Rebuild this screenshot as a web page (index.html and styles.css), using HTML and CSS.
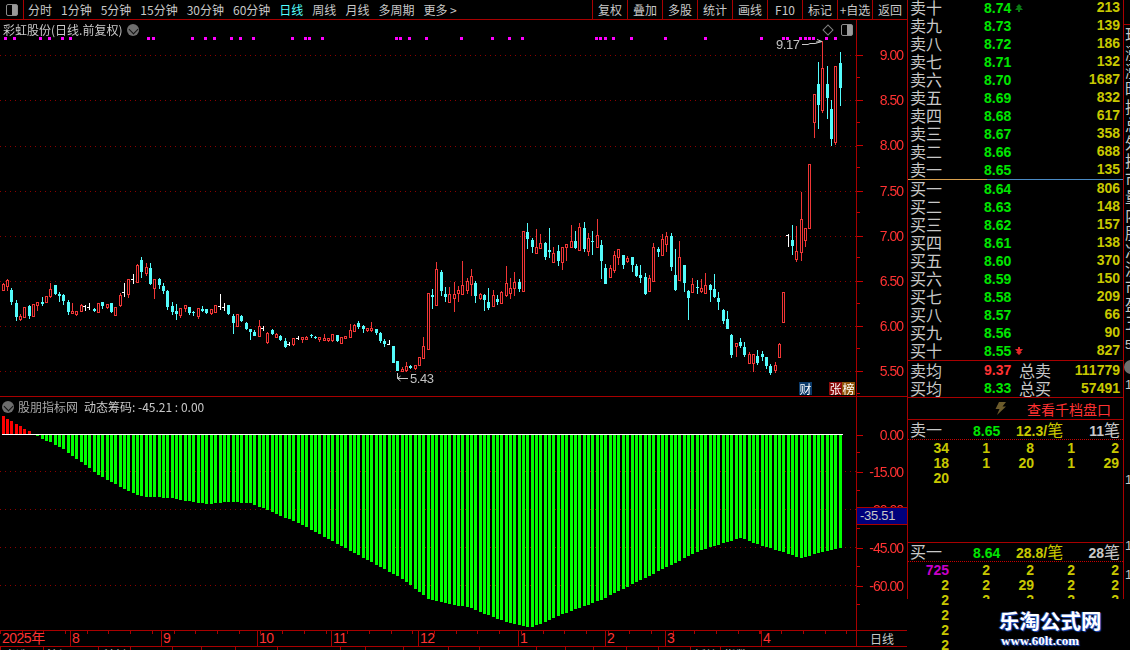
FILE: index.html
```html
<!DOCTYPE html>
<html lang="zh-CN">

<head>
    <meta charset="UTF-8">
    <title>彩虹股份 日线</title>
    <link rel="stylesheet" href="styles.css">
</head>

<body>
    <div class="main">
        <div class="toolbar">
            <div class="panel-toggle"><span class="toggle-icon"></span></div>
            <div class="periods">
                <span>分时</span>
                <span>1分钟</span>
                <span>5分钟</span>
                <span>15分钟</span>
                <span>30分钟</span>
                <span>60分钟</span>
                <span class="active">日线</span>
                <span>周线</span>
                <span>月线</span>
                <span>多周期</span>
                <span>更多 &gt;</span>
            </div>
            <div class="tools">
                <span>复权</span>
                <span>叠加</span>
                <span>多股</span>
                <span>统计</span>
                <span>画线</span>
                <span>F10</span>
                <span>标记</span>
                <span>+自选</span>
                <span>返回</span>
            </div>
        </div>

        <div class="chart-row">
            <div class="plot">
                <canvas id="price" width="856" height="376"></canvas>
                <div class="plot-title">彩虹股份(日线.前复权)<span class="round-btn"></span></div>
                <span class="diamond"></span>
                <span class="toggle-icon plot-toggle"></span>
                <span class="mark mark-high">9.17</span>
                <svg class="arrow arrow-high" width="24" height="8" viewBox="0 0 24 8">
                    <path d="M1 7.500H7L9 6.500H14L21 4.500M21 4.500L16 2.500M21 4.500L15 5" fill="none" stroke="#c8c8c8" />
                </svg>
                <span class="mark mark-low">5.43</span>
                <svg class="arrow arrow-low" width="14" height="9" viewBox="0 0 14 9">
                    <path d="M1.500 0V5.500H12M1.500 5.500L4.500 3M1.500 5.500L4.500 8" fill="none" stroke="#c8c8c8" />
                </svg>
                <span class="badge badge-cai">财</span>
                <span class="badge badge-zhang">张</span>
                <span class="badge badge-bang">榜</span>
            </div>
            <div class="axis price-axis">
                <div class="tick price-tick">9.00</div>
                <div class="tick price-tick">8.50</div>
                <div class="tick price-tick">8.00</div>
                <div class="tick price-tick">7.50</div>
                <div class="tick price-tick">7.00</div>
                <div class="tick price-tick">6.50</div>
                <div class="tick price-tick">6.00</div>
                <div class="tick price-tick">5.50</div>
            </div>
        </div>

        <div class="chart-row indicator-row">
            <div class="plot">
                <canvas id="chips" width="856" height="233"></canvas>
                <div class="plot-title indicator-title">
                    <span class="round-btn"></span>
                    <span class="indicator-name">股朋指标网</span>
                    <span class="indicator-value">动态筹码: -45.21 : 0.00</span>
                </div>
            </div>
            <div class="axis chips-axis">
                <div class="tick chips-tick">0.00</div>
                <div class="tick chips-tick">-15.00</div>
                <div class="tick chips-tick">-30.00</div>
                <div class="tick chips-tick">-45.00</div>
                <div class="tick chips-tick">-60.00</div>
                <div class="cross-value">-35.51</div>
            </div>
        </div>

        <div class="time-row">
            <div class="months">
                <span style="width:70px">2025年</span>
                <span style="width:91px">8</span>
                <span style="width:96px">9</span>
                <span style="width:74px">10</span>
                <span style="width:87px">11</span>
                <span style="width:100px">12</span>
                <span style="width:87px">1</span>
                <span style="width:60px">2</span>
                <span style="width:96px">3</span>
                <span style="width:95px">4</span>
            </div>
            <div class="time-mode">日线</div>
        </div>

        <div class="tabs">
            <span style="width:43px">自选</span>
            <span style="width:55px">沪深</span>
            <span style="width:32px">科创</span>
            <span style="width:42px"></span>
            <span style="width:29px"></span>
            <span style="width:34px"></span>
            <span style="width:42px"></span>
            <span style="width:63px"></span>
            <span style="width:25px"></span>
            <span style="width:38px"></span>
            <span style="width:45px"></span>
            <span style="width:31px"></span>
            <span style="width:57px"></span>
            <span style="width:29px"></span>
            <span style="width:28px"></span>
            <span style="width:33px"></span>
            <span style="width:32px"></span>
            <span style="width:32px"></span>
            <span style="width:30px">板块</span>
            <span style="width:48px">指数</span>
        </div>
    </div>

    <div class="book">
        <div class="levels">
            <div class="level"><span>卖十</span><b class="down">8.74<svg class="flag" width="8" height="8" viewBox="0 0 8 8"><path d="M4 0L7 3H5.500L8 6H5V8H3V6H0L2.500 3H1Z" fill="#0b7a14" /></svg></b><em>213</em></div>
            <div class="level"><span>卖九</span><b class="down">8.73</b><em>139</em></div>
            <div class="level"><span>卖八</span><b class="down">8.72</b><em>186</em></div>
            <div class="level"><span>卖七</span><b class="down">8.71</b><em>132</em></div>
            <div class="level"><span>卖六</span><b class="down">8.70</b><em>1687</em></div>
            <div class="level"><span>卖五</span><b class="down">8.69</b><em>832</em></div>
            <div class="level"><span>卖四</span><b class="down">8.68</b><em>617</em></div>
            <div class="level"><span>卖三</span><b class="down">8.67</b><em>358</em></div>
            <div class="level"><span>卖二</span><b class="down">8.66</b><em>688</em></div>
            <div class="level"><span>卖一</span><b class="down">8.65</b><em>135</em></div>
        </div>
        <div class="spread"></div>
        <div class="levels buy-levels">
            <div class="level"><span>买一</span><b class="down">8.64</b><em>806</em></div>
            <div class="level"><span>买二</span><b class="down">8.63</b><em>148</em></div>
            <div class="level"><span>买三</span><b class="down">8.62</b><em>157</em></div>
            <div class="level"><span>买四</span><b class="down">8.61</b><em>138</em></div>
            <div class="level"><span>买五</span><b class="down">8.60</b><em>370</em></div>
            <div class="level"><span>买六</span><b class="down">8.59</b><em>150</em></div>
            <div class="level"><span>买七</span><b class="down">8.58</b><em>209</em></div>
            <div class="level"><span>买八</span><b class="down">8.57</b><em>66</em></div>
            <div class="level"><span>买九</span><b class="down">8.56</b><em>90</em></div>
            <div class="level"><span>买十</span><b class="down">8.55<svg class="flag" width="8" height="8" viewBox="0 0 8 8"><path d="M4 8L7 5H5.500L8 2H5V0H3V2H0L2.500 5H1Z" fill="#e02828" /></svg></b><em>827</em></div>
        </div>
        <div class="totals">
            <div class="total"><span>卖均</span><b class="up">9.37</b><span class="total-name">总卖</span><em>111779</em></div>
            <div class="total"><span>买均</span><b class="down">8.33</b><span class="total-name">总买</span><em>57491</em></div>
        </div>
        <div class="depth-link">
            <svg width="12" height="13" viewBox="0 0 12 13"><path d="M4 0H11L7.500 4.500H11L2 13L4.500 7H0.500Z" fill="#6b5a2a" /></svg>
            <span>查看千档盘口</span>
        </div>
        <div class="queue sell-queue">
            <div class="queue-head"><span>卖一</span><b class="down">8.65</b><em>12.3/<u>笔</u></em><i>11<u>笔</u></i></div>
            <div class="orders">
                <span>34</span><span>1</span><span>8</span><span>1</span><span>2</span>
                <span>18</span><span>1</span><span>20</span><span>1</span><span>29</span>
                <span>20</span>
            </div>
        </div>
        <div class="queue buy-queue">
            <div class="queue-head"><span>买一</span><b class="down">8.64</b><em>28.8/<u>笔</u></em><i>28<u>笔</u></i></div>
            <div class="orders">
                <span class="big">725</span><span>2</span><span>2</span><span>2</span><span>2</span>
                <span>2</span><span>2</span><span>29</span><span>2</span><span>2</span>
                <span>2</span><span>2</span><span>2</span><span>2</span><span>2</span>
                <span>2</span><span></span><span></span><span></span><span></span>
                <span>2</span><span></span><span></span><span></span><span></span>
                <span>2</span><span></span><span></span><span></span><span></span>
            </div>
        </div>
    </div>

    <div class="strip">
        <div class="strip-chars">现涨涨昨振总外换市量内股净流市盈五</div>
        <div class="strip-num strip-five">5</div>
        <div class="strip-dot"></div>
        <div class="strip-num strip-first">1</div>
        <div class="strip-num strip-second">1</div>
        <div class="strip-num strip-third">1</div>
        <div class="strip-num strip-fourth">1</div>
    </div>

    <div class="watermark">
        <div class="wm-name">乐淘公式网</div>
        <div class="wm-url">www.60lt.com</div>
    </div>

    <script src="chart.js"></script>
</body>

</html>
```

FILE: styles.css
```css
* {
    box-sizing: border-box;
}

html,
body {
    margin: 0;
    height: 650px;
    overflow: hidden;
    background: #000;
}

body {
    display: flex;
    position: relative;
    color: #c8c8c8;
    font-family: "Noto Sans CJK SC", "Liberation Sans", sans-serif;
    font-size: 12px;
}

b,
em,
i {
    font-style: normal;
    font-family: "Liberation Sans", "Noto Sans CJK SC", sans-serif;
}

.main {
    width: 907px;
    flex: none;
    display: flex;
    flex-direction: column;
}

.toolbar {
    height: 20px;
    flex: none;
    display: flex;
    border-bottom: 1px solid #a80000;
    line-height: 19px;
}

.panel-toggle {
    width: 24px;
    border-right: 1px solid #a80000;
    display: flex;
    align-items: center;
    justify-content: center;
}

.toggle-icon {
    display: block;
    width: 12px;
    height: 12px;
    border: 1px solid #8c8c8c;
    border-radius: 2px;
    background: linear-gradient(90deg, #000 55%, #9a9a9a 55%);
}

.periods {
    display: flex;
    gap: 9px;
    padding-left: 4px;
    flex: 1;
    white-space: nowrap;
}

.periods .active {
    color: #54ffff;
}

.tools {
    display: flex;
}

.tools span {
    width: 35px;
    border-left: 1px solid #a80000;
    text-align: center;
    white-space: nowrap;
}

.chart-row {
    display: flex;
    height: 377px;
    flex: none;
    border-bottom: 1px solid #a80000;
}

.indicator-row {
    height: 234px;
    border-bottom: 1px solid #a80000;
}

.plot {
    position: relative;
    width: 856px;
    flex: none;
}

.plot canvas {
    display: block;
}

.plot-title {
    position: absolute;
    left: 3px;
    top: 1px;
    display: flex;
    align-items: center;
    line-height: 17px;
    white-space: nowrap;
}

.round-btn {
    display: inline-block;
    position: relative;
    width: 12px;
    height: 12px;
    margin-left: 5px;
    border-radius: 50%;
    background: #6e6e6e;
}

.round-btn::after {
    content: "";
    position: absolute;
    left: 3px;
    top: 2px;
    width: 6px;
    height: 6px;
    border-right: 1px solid #111;
    border-bottom: 1px solid #111;
    transform: rotate(45deg);
}

.diamond {
    position: absolute;
    left: 824px;
    top: 6px;
    width: 8px;
    height: 8px;
    border: 1px solid #808080;
    transform: rotate(45deg);
}

.plot-toggle {
    position: absolute;
    left: 841px;
    top: 4px;
}

.mark {
    position: absolute;
    font-family: "Liberation Sans", sans-serif;
    font-size: 13px;
    letter-spacing: -0.4px;
    line-height: 14px;
    color: #c0c0c0;
}

.mark-high {
    left: 776px;
    top: 18px;
}

.mark-low {
    left: 410px;
    top: 352px;
}

.arrow {
    position: absolute;
}

.arrow-high {
    left: 801px;
    top: 17px;
}

.arrow-low {
    left: 396px;
    top: 353px;
}

.badge {
    position: absolute;
    top: 362px;
    width: 13px;
    height: 13px;
    font-size: 12px;
    line-height: 13px;
    text-align: center;
    color: #fff;
}

.badge-cai {
    left: 799px;
    background: #0b3a6a;
}

.badge-zhang {
    left: 829px;
    background: #8a0a0a;
}

.badge-bang {
    left: 842px;
    background: #8f5408;
}

.axis {
    position: relative;
    width: 51px;
    flex: none;
    border-left: 1px solid #a80000;
    font-family: "Liberation Sans", sans-serif;
    font-size: 14px;
    letter-spacing: -1px;
    color: #ff3232;
    text-align: right;
    padding-right: 4px;
}

.price-axis {
    padding-top: 12.4px;
}

.chips-axis {
    padding-top: 18.650px;
}

.tick {
    position: relative;
    display: flex;
    align-items: center;
    justify-content: flex-end;
}

.tick::before,
.tick::after {
    content: "";
    position: absolute;
    left: 0;
    height: 1px;
    background: #c80000;
}

.tick::before {
    top: 50%;
    width: 6px;
}

.tick::after {
    bottom: 0;
    width: 3px;
}

.price-tick {
    height: 45.2px;
}

.chips-tick {
    height: 37.8px;
}

.cross-value {
    position: absolute;
    left: 0;
    right: 0;
    top: 110px;
    height: 18px;
    padding-left: 3px;
    background: #00007c;
    border-top: 1px solid #a80000;
    border-bottom: 1px solid #a80000;
    color: #c8c8c8;
    font-size: 13px;
    letter-spacing: -0.3px;
    line-height: 16px;
    text-align: left;
}

.indicator-title {
    left: 2px;
    top: 1px;
}

.indicator-title .round-btn {
    margin-left: 0;
}

.indicator-name {
    margin-left: 4px;
    color: #a8a8a8;
}

.indicator-value {
    margin-left: 6px;
    color: #c8c8c8;
}

.time-row {
    display: flex;
    height: 16px;
    flex: none;
    border-bottom: 1px solid #a80000;
    font-family: "Liberation Sans", "Noto Sans CJK SC", sans-serif;
    line-height: 15px;
}

.months {
    display: flex;
    width: 856px;
    flex: none;
    font-size: 14px;
    letter-spacing: -0.5px;
    color: #ff3232;
    background: repeating-linear-gradient(90deg, #a80000 0 1px, transparent 1px 21.700px) 0 0 / 100% 3px no-repeat;
}

.months span {
    padding-left: 1px;
    border-left: 1px solid #a80000;
    white-space: nowrap;
    flex: none;
}

.months span:first-child {
    border-left: none;
    padding-left: 2px;
}

.time-mode {
    flex: 1;
    border-left: 1px solid #a80000;
    text-align: center;
    font-family: "Noto Sans CJK SC", sans-serif;
}

.tabs {
    display: flex;
    height: 3px;
    overflow: hidden;
    line-height: 15px;
}

.tabs span {
    flex: none;
    padding-left: 3px;
    border-left: 1px solid #a80000;
    white-space: nowrap;
}

.book {
    width: 217px;
    flex: none;
    border-left: 1px solid #a80000;
    border-right: 1px solid #a80000;
    display: flex;
    flex-direction: column;
    height: 599px;
    font-size: 16px;
}

.levels {
    margin-top: -1px;
}

.buy-levels {
    margin-top: 0;
}

.level {
    display: flex;
    height: 18px;
    line-height: 17px;
    padding: 0 3px 0 2px;
    white-space: nowrap;
}

.level span {
    width: 74px;
    flex: none;
}

.level b {
    font-size: 14px;
    flex: 1;
    display: flex;
    align-items: center;
    gap: 4px;
}

.level em,
.total em {
    color: #c8c800;
    font-weight: bold;
    font-size: 14px;
    letter-spacing: 0;
    text-align: right;
}

.down {
    color: #00e600;
}

.up {
    color: #ff3232;
}

.spread {
    height: 1px;
    flex: none;
    background: linear-gradient(90deg, #d9a04e 0 79px, #4a8ac4 79px);
}

.totals {
    height: 38px;
    flex: none;
    border-top: 1px solid #a80000;
    border-bottom: 1px solid #a80000;
}

.total {
    display: flex;
    height: 18px;
    line-height: 18px;
    padding: 0 3px 0 2px;
}

.total span {
    width: 74px;
    flex: none;
}

.total b {
    font-size: 14px;
    width: 35px;
    flex: none;
}

.total .total-name {
    width: 48px;
}

.total em {
    flex: 1;
}

.depth-link {
    height: 22px;
    flex: none;
    display: flex;
    align-items: center;
    justify-content: flex-end;
    gap: 20px;
    padding-right: 12px;
    border-bottom: 1px solid #a80000;
    color: #ff3232;
    font-size: 14px;
}

.queue-head {
    display: flex;
    align-items: baseline;
    height: 20px;
    line-height: 18px;
    padding: 0 2px;
    border-bottom: 1px dotted #c80000;
    white-space: nowrap;
}

.buy-queue .queue-head {
    height: 19px;
    line-height: 17px;
}

.queue-head span {
    width: 63px;
    flex: none;
}

.queue-head b {
    width: 43px;
    flex: none;
    font-size: 14px;
}

.queue-head em {
    width: 70px;
    flex: none;
    color: #c8c800;
    font-size: 14px;
    font-weight: bold;
}

.queue-head i {
    flex: 1;
    font-size: 14px;
    text-align: right;
    font-weight: bold;
    padding-right: 1px;
}

.queue-head u {
    text-decoration: none;
    font-family: "Noto Sans CJK SC", sans-serif;
    font-size: 16px;
    font-weight: normal;
    line-height: 1;
}

.sell-queue {
    height: 123px;
    flex: none;
    border-bottom: 1px solid #a80000;
}

.orders {
    display: grid;
    grid-template-columns: 41px 41px 44px 41px 44px;
    grid-auto-rows: 15px;
    padding-top: 1px;
    font-family: "Liberation Sans", sans-serif;
    font-size: 14px;
    font-weight: bold;
    line-height: 15px;
    color: #c8c800;
    text-align: right;
}

.orders .big {
    color: #c800c8;
}

.strip {
    flex: 1;
    overflow: hidden;
    font-size: 16px;
    white-space: nowrap;
}

.strip-chars {
    width: 16px;
    margin-top: 24px;
    border-top: 1px solid #a80000;
    line-height: 18px;
    white-space: normal;
    padding: 0 0 0 1px;
    text-indent: 0;
}

.strip-num {
    font-family: "Liberation Sans", sans-serif;
    font-size: 13px;
    line-height: 14px;
    padding-left: 1px;
}

.strip-five {
    margin-top: 7px;
}

.strip-dot {
    width: 14px;
    height: 14px;
    margin-top: 8px;
    border-radius: 50%;
    background: #6e6e6e;
}

.strip-first {
    margin-top: 4px;
}

.strip-second {
    margin-top: 81px;
}

.strip-third {
    margin-top: 52px;
}

.strip-fourth {
    margin-top: 15px;
}

.watermark {
    position: absolute;
    left: 955px;
    top: 599px;
    width: 175px;
    height: 51px;
    background: #000;
    padding: 9px 0 0 44px;
    color: #fff;
    font-weight: bold;
    text-shadow: 1px 1px 1px #1f4fc8, -1px 0 1px #1f4fc8;
}

.wm-name {
    font-size: 20.500px;
    line-height: 24px;
    white-space: nowrap;
}

.wm-url {
    font-family: "Liberation Serif", serif;
    font-size: 13px;
    line-height: 17px;
    padding-left: 2px;
}
```

FILE: chart.js
```js
// candles are kind + high,top,bottom,low read off 3x crops, so every block keeps its own origin
const blocks = [
    [250, 'r100,103,120,122 r88,90,107,122 c113,120,156,164 c150,158,201,212 r193,198,207,213 r172,172,201,204 c165,168,198,206 r163,163,198,200 r156,156,165,183 c141,155,161,167 r138,138,155,155 r99,118,137,143 c105,105,133,135 c126,132,137,156 c133,136,153,165 c150,156,185,194 r159,184,190,192 r183,184,191,197 r162,165,183,183 w166,168,170,183 w159,171,173,179 c175,178,183,186 r160,160,185,185 c156,156,167,176 r163,163,171,177 c159,159,186,190 r171,171,194,194 r130,136,164,170 w99,126,128,141 r88,88,131,144 w72,88,90,102 r43,45,95,100 c21,30,66,84 r40,52,69,78 c40,54,102,105 r88,88,113,147 c84,87,105,117 c99,108,123,132 c120,123,171,180 c156,168,186,195 c162,183,192,210 r175,175,195,204 r165,166,174,187 c171,171,189,195 c183,186,188,198 r175,175,198,207 c168,177,183,187 c177,177,189,193 r178,178,189,195 r165,165,186,186 w132,168,171,180 w159,171,173,183 c165,165,192,195 c192,198,219,252 r192,192,228,231 c195,198,213,216 c216,219,237,240 c237,237,246,270 c240,246,258,258 r210,228,258,258 w228,234,236,243 r246,249,276,282 c237,240,252,255 r250,252,261,264 c255,258,270,273 c264,273,291,294 w276,283,285,288 r264,264,282,288 w258,265,267,270'],
    [200, 'r411,412,418,429 r408,411,416,418 c402,405,409,414 c407,411,413,417 r411,412,418,426 r402,415,419,420 r414,415,421,426 r402,403,420,426 c405,405,423,426 r411,411,429,429 r408,408,415,417 r372,390,411,414 r372,375,393,393 c363,369,381,387 c375,378,387,399 r384,384,390,396 r366,384,390,396 c387,387,399,405 c396,399,423,429 c417,423,432,441 w420,432,434,435 c438,438,489,489 c483,483,513,513 r501,507,513,514 r486,498,511,516 c495,498,504,507 r495,495,504,510 r471,471,495,498 r411,438,473,474 r279,279,446,447 c267,285,291,327 r186,207,315,315 c210,216,273,288 c261,282,291,306 r261,282,306,306 r246,282,294,336 r258,270,279,306 r183,255,282,282 r234,243,270,282 r207,228,252,288 c243,249,288,309 r279,282,294,300 c282,285,300,333 c264,306,324,330 r270,285,318,318 c285,297,306,315 r273,276,309,312 r198,249,285,291 r234,264,279,297 r216,246,264,288 c237,246,267,276 r93,93,273,273 c69,96,117,147 c114,120,141,159 r87,141,159,159'],
    [200, 'r102,129,144,144 c126,129,171,180 c84,150,156,174 r141,159,186,186 c135,153,183,198 r141,141,186,210 r132,132,141,183 r75,123,141,141 c93,123,144,147 r69,81,150,150 c66,84,147,156 r99,114,153,168 c93,123,126,165 r57,105,141,141 c120,135,183,237 c192,204,252,252 r195,204,231,231 r153,165,210,219 r147,147,171,195 c165,165,195,207 r168,174,183,189 c171,171,195,216 c192,198,228,231 c195,225,234,249 c219,231,282,285 r225,234,273,276 r129,141,243,243 c141,147,156,171 r102,117,165,168 r96,108,132,156 c99,108,201,213 c147,225,270,273 r123,171,240,240 c195,195,249,276 c270,273,294,360 r234,252,276,276 c240,261,264,282 r237,264,273,279 r219,255,279,282 c252,255,270,306 c222,267,291,294 c276,294,306,330 c327,330,363,372 c333,357,387,387 c402,405,465,474 r429,429,438,471 c414,426,438,444 c426,441,465,471 r456,462,489,489 r462,462,489,516 c450,468,489,495'],
    [170, 'c543,552,561,573 c561,561,588,597 c582,588,609,615 r576,585,600,609 r519,522,561,561 r366,366,456,456 w192,195,197,231 c165,210,228,255 r168,243,267,276 r66,147,246,273 r174,174,210,231 r-18,-18,174,174'],
    [30, 'r192,192,276,324 c96,162,225,297 r33,114,240,249 c108,162,204,267 c210,237,327,348 r108,108,336,345 c66,99,174,228']
];

const candles = [];
blocks.forEach(function (block) {
    block[1].split(' ').forEach(function (item) {
        const v = item.slice(1).split(',').map(function (n) {
            return Math.round(block[0] + Number(n) / 3);
        });
        candles.push({ kind: item[0], high: v[0], top: v[1], bottom: v[2], low: v[3] });
    });
});

const dots = [5, 14, 40, 49, 62, 70, 148, 153, 192, 205, 214, 231, 240, 253, 292, 305, 309, 322, 396, 400, 409, 426,
    461, 492, 509, 522, 596, 600, 605, 613, 631, 665, 705, 761, 783, 787, 800, 805, 809, 813, 826, 835];

const RED = '#f03636';
const CYAN = '#54fcfc';

function barX(i) {
    return Math.round(2.67 + i * 4.3368);
}

function dottedLine(ctx, y) {
    ctx.fillStyle = '#8c0000';
    for (let x = 0; x < 856; x += 5) {
        ctx.fillRect(x, y, 1, 1);
    }
}

function drawPrice() {
    const ctx = document.getElementById('price').getContext('2d');
    ctx.translate(0, -20);

    [55, 100, 146, 191, 236, 281, 326, 371].forEach(function (y) {
        dottedLine(ctx, y);
    });

    ctx.fillStyle = '#ff00ff';
    dots.forEach(function (x) {
        ctx.fillRect(x - 1, 37, 3, 3);
    });

    candles.forEach(function (c, i) {
        const x = barX(i);
        const height = Math.max(c.bottom - c.top, 1);
        if (c.kind === 'r') {
            ctx.fillStyle = RED;
            ctx.fillRect(x, c.high, 1, c.low - c.high);
            ctx.fillRect(x - 1, c.top, 3, height + 1);
            ctx.fillStyle = '#000';
            ctx.fillRect(x, c.top + 1, 1, height - 1);
        } else if (c.kind === 'c') {
            ctx.fillStyle = CYAN;
            ctx.fillRect(x, c.high, 1, c.low - c.high);
            ctx.fillRect(x - 1, c.top, 3, height);
        } else {
            ctx.fillStyle = '#fff';
            ctx.fillRect(x, c.high, 1, c.low - c.high);
            ctx.fillRect(x - 2, c.top, 3, 1);
        }
    });
}

// envelope of the green bars, x then lowest y
const envelope = [[36, 436], [60, 447], [100, 476], [138, 496], [170, 498], [205, 504], [230, 502], [250, 503],
    [300, 524], [350, 551], [400, 578], [430, 600], [470, 608], [500, 620], [530, 628], [560, 615], [600, 600],
    [650, 575], [700, 550], [740, 538], [760, 545], [800, 558], [842, 547]];

function envelopeAt(x) {
    for (let i = 1; i < envelope.length; i++) {
        if (x <= envelope[i][0]) {
            const a = envelope[i - 1];
            const b = envelope[i];
            return a[1] + (b[1] - a[1]) * (x - a[0]) / (b[0] - a[0]);
        }
    }
    return envelope[envelope.length - 1][1];
}

function drawChips() {
    const ctx = document.getElementById('chips').getContext('2d');
    ctx.translate(0, -397);

    [471, 509, 547, 585].forEach(function (y) {
        dottedLine(ctx, y);
    });

    const redTops = [416, 419, 421, 424, 426, 429, 431];
    candles.forEach(function (c, i) {
        const x = barX(i);
        if (i < redTops.length) {
            ctx.fillStyle = '#ff0000';
            ctx.fillRect(x - 1, redTops[i], 3, 434 - redTops[i]);
        } else if (i > 7) {
            ctx.fillStyle = '#00ff00';
            ctx.fillRect(x - 1, 435, 3, Math.round(envelopeAt(x)) - 435);
        }
    });

    ctx.fillStyle = '#fff';
    ctx.fillRect(2, 434, 841, 1);
}

drawPrice();
drawChips();
```
